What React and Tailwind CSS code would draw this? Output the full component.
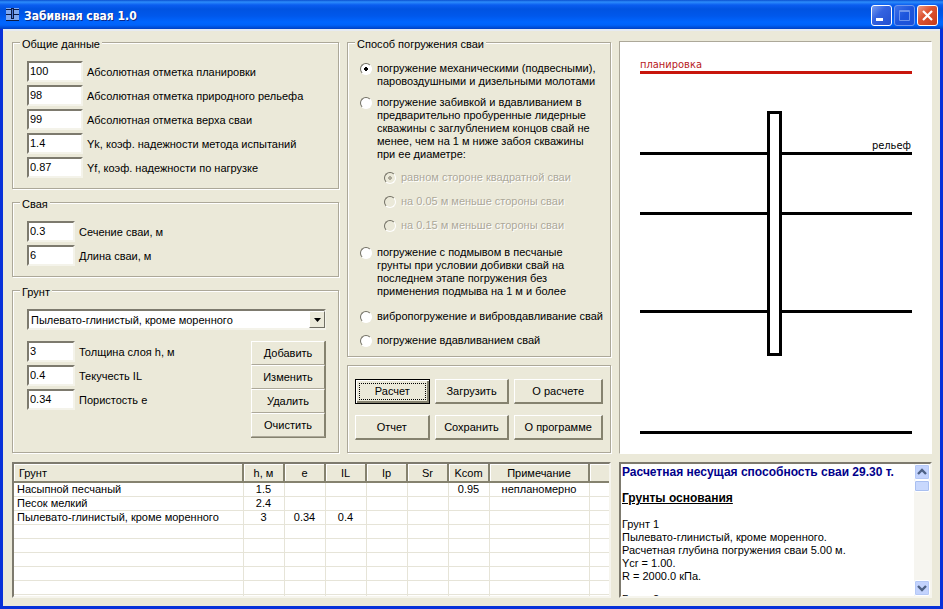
import React, { useState } from "react";

const generalFields = [
  { id: "plan", value: "100", label: "Абсолютная отметка планировки" },
  { id: "relief", value: "98", label: "Абсолютная отметка природного рельефа" },
  { id: "top", value: "99", label: "Абсолютная отметка верха сваи" },
  { id: "yk", value: "1.4", label: "Yk, коэф. надежности метода испытаний" },
  { id: "yf", value: "0.87", label: "Yf, коэф. надежности по нагрузке" },
];

const pileFields = [
  { id: "section", value: "0.3", label: "Сечение сваи, м" },
  { id: "length", value: "6", label: "Длина сваи, м" },
];

const soilFields = [
  { id: "thickness", value: "3", label: "Толщина слоя h, м" },
  { id: "fluidity", value: "0.4", label: "Текучесть IL" },
  { id: "porosity", value: "0.34", label: "Пористость e" },
];

const columns = ["Грунт", "h, м", "e", "IL", "Ip", "Sr", "Kcom", "Примечание", ""];

const soils = [
  ["Насыпной песчаный", "1.5", "", "", "", "", "0.95", "непланомерно", ""],
  ["Песок мелкий", "2.4", "", "", "", "", "", "", ""],
  ["Пылевато-глинистый, кроме моренного", "3", "0.34", "0.4", "", "", "", "", ""],
];

const emptyRows = [0, 1, 2, 3, 4, 5];

const Group = ({ title, className, children }) => (
  <fieldset className="min-w-0 border border-[#aca899] shadow-[1px_1px_0_#fff,inset_1px_1px_0_#fff]">
    <legend className="ml-[7px] bg-[#ebe9d9] px-[2px] pt-1">{title}</legend>
    <div className={className}>{children}</div>
  </fieldset>
);

const Field = ({ id, value, label, width }) => (
  <div className="flex items-center gap-1">
    <input
      id={id}
      type="text"
      defaultValue={value}
      className={`h-[21px] border-2 border-t-[#7d7a6e] border-l-[#7d7a6e] border-r-[#f4f3ea] border-b-[#f4f3ea] bg-white px-[1px] pb-[2px] outline-none ${width}`}
    />
    <label htmlFor={id} className="pt-[2px] whitespace-nowrap">
      {label}
    </label>
  </div>
);

const Button = ({ children }) => (
  <button
    type="button"
    className="h-[25px] border-t border-l border-r-2 border-b-2 border-t-white border-l-white border-r-[#85826f] border-b-[#85826f] bg-[#ebe9d9] text-center whitespace-nowrap active:border-t-[#85826f] active:border-l-[#85826f]">
    {children}
  </button>
);

const Radio = ({ name, value, current, onChange, lines, disabled, className = "" }) => (
  <label
    className={`flex items-start gap-[5px] ${disabled ? "text-[#aca899] [text-shadow:1px_1px_0_#fff]" : ""} ${className}`}>
    <input
      type="radio"
      name={name}
      value={value}
      checked={current === value}
      disabled={disabled}
      onChange={() => onChange(value)}
      className="mt-[1px] size-3 shrink-0 appearance-none rounded-full border border-t-[#716f64] border-l-[#716f64] border-r-white border-b-white bg-white checked:bg-[radial-gradient(circle,#000_2px,#fff_2px)] disabled:bg-[#ebe9d9] disabled:checked:bg-[radial-gradient(circle,#aca899_2px,#ebe9d9_2px)]"
    />
    <span className="whitespace-pre">{lines.join("\n")}</span>
  </label>
);

const TitleBar = () => (
  <header className="flex h-[29px] items-center bg-[linear-gradient(#0a4fd0_0,#2c8cfb_2px,#0a5df0_5px,#0053e1_9px,#0058ec_16px,#0066ff_22px,#0063fa_25px,#0041c4_29px)] pr-[5px] pl-[6px]">
    <svg viewBox="0 0 13 13" className="size-[13px]" shapeRendering="crispEdges">
      <rect width="13" height="13" fill="#7fa8f0" />
      <path d="M0 1.500h13M0 6.500h13M0 12.500h13" stroke="#0b1a44" />
      <path d="M5.500 0.500h2v10h-2z" fill="#4d7bd8" stroke="#0b1a44" />
    </svg>
    <h1 className="ml-[5px] flex-1 pt-[3px] font-['DejaVu_Sans_Condensed','DejaVu_Sans',sans-serif] text-[12px] leading-4 font-bold text-white [text-shadow:1px_1px_0_#0a2a8a]">
      Забивная свая 1.0
    </h1>
    <div className="flex gap-[2px] pt-[2px]">
      <button
        type="button"
        aria-label="Свернуть"
        className="size-[21px] rounded-[3px] border border-white bg-[linear-gradient(135deg,#7a9df0,#3463e0_40%,#2350d0)]">
        <svg viewBox="0 0 19 19">
          <path d="M4 12h7v3H4z" fill="#fff" />
        </svg>
      </button>
      <button
        type="button"
        aria-label="Развернуть"
        className="size-[21px] rounded-[3px] border border-[#6f97ee] bg-[linear-gradient(135deg,#3f72ea,#1d55dc_50%,#1a50d8)]">
        <svg viewBox="0 0 19 19">
          <path d="M4.500 4.500h10v10h-10zM4 5.500h11" fill="none" stroke="#6e95ec" />
        </svg>
      </button>
      <button
        type="button"
        aria-label="Закрыть"
        className="size-[21px] rounded-[3px] border border-white bg-[linear-gradient(135deg,#ee9b83,#dd5533_40%,#c63a18)]">
        <svg viewBox="0 0 19 19">
          <path d="M5 5l9 9M14 5l-9 9" stroke="#fff" strokeWidth="2.2" />
        </svg>
      </button>
    </div>
  </header>
);

const PileScheme = () => (
  <svg viewBox="0 0 311 411" className="block w-full">
    <g stroke="#000" strokeWidth="3">
      <path d="M20 30.500h272" stroke="#c8160c" />
      <path d="M20 111.500h272M20 171.500h272M20 269.500h272M20 390.500h272" />
      <rect x="148.500" y="70.500" width="12" height="242" fill="#fff" />
    </g>
    <text x="20" y="26" fill="#b8201c" className="font-['DejaVu_Sans_Condensed','DejaVu_Sans',sans-serif] text-[11px]">
      планировка
    </text>
    <text x="291" y="107" textAnchor="end" className="font-['DejaVu_Sans_Condensed','DejaVu_Sans',sans-serif] text-[11px]">
      рельеф
    </text>
  </svg>
);

const SoilTable = () => (
  <div className="h-[136px] overflow-hidden border-2 border-t-[#7d7a6e] border-l-[#7d7a6e] border-r-[#f6f5ee] border-b-[#f6f5ee] bg-white">
    <table className="w-full table-fixed border-collapse">
      <colgroup>
        <col className="w-[229px]" />
        <col className="w-[41px]" />
        <col className="w-[41px]" />
        <col className="w-[41px]" />
        <col className="w-[41px]" />
        <col className="w-[41px]" />
        <col className="w-[41px]" />
        <col className="w-[100px]" />
        <col />
      </colgroup>
      <thead>
        <tr className="h-[18px] bg-[#ebe9d9]">
          {columns.map((name, i) => (
            <th
              key={i}
              className={`border-r-2 border-b-2 border-[#85826f] p-0 pt-[1px] font-normal shadow-[inset_1px_1px_0_#fff] last:border-r-0 ${i === 0 ? "pl-[5px] text-left" : "text-center"}`}>
              {name}
            </th>
          ))}
        </tr>
      </thead>
      <tbody>
        {soils.map((row) => (
          <tr key={row[0]} className="h-[14px]">
            {row.map((cell, i) => (
              <td
                key={i}
                className={`border-r border-b border-[#e6e4d8] p-0 whitespace-nowrap last:border-r-0 ${i === 0 ? "pl-[3px] text-left" : "text-center"}`}>
                {cell}
              </td>
            ))}
          </tr>
        ))}
        {emptyRows.map((row) => (
          <tr key={row} className="h-[14px]">
            {columns.map((_, i) => (
              <td key={i} className="border-r border-b border-[#e6e4d8] p-0 last:border-r-0" />
            ))}
          </tr>
        ))}
      </tbody>
    </table>
  </div>
);

const ScrollButton = ({ label, d }) => (
  <button
    type="button"
    aria-label={label}
    className="h-4 w-full rounded-[2px] border border-white bg-[#c3d3fd] shadow-[inset_0_0_0_1px_#b4c8f6]">
    <svg viewBox="0 0 14 14">
      <path d={d} fill="none" stroke="#4d6185" strokeWidth="2.4" />
    </svg>
  </button>
);

const Report = () => (
  <div className="flex h-[136px] overflow-hidden border-2 border-t-[#7d7a6e] border-l-[#7d7a6e] border-r-[#f6f5ee] border-b-[#f6f5ee] bg-white">
    <div className="min-w-0 flex-1 overflow-hidden pt-[2px] pl-[1px] whitespace-nowrap">
      <h2 className="text-[12px] font-bold text-[#00008b]">
        Расчетная несущая способность сваи 29.30 т.
      </h2>
      <h3 className="mt-[13px] text-[12px] font-bold underline">Грунты основания</h3>
      <p className="mt-[13px]">Грунт 1</p>
      <p>Пылевато-глинистый, кроме моренного.</p>
      <p>Расчетная глубина погружения сваи 5.00 м.</p>
      <p>Ycr = 1.00.</p>
      <p>R = 2000.0 кПа.</p>
      <p className="mt-[10px]">Грунт 2</p>
    </div>
    <div className="flex w-4 flex-col bg-[#f6f5f0]">
      <ScrollButton label="Вверх" d="M3 9l4-4 4 4" />
      <div className="h-3 rounded-[2px] border border-white bg-[#c8d8fd] shadow-[inset_0_0_0_1px_#a9bff0]" />
      <div className="flex-1" />
      <ScrollButton label="Вниз" d="M3 5l4 4 4-4" />
    </div>
  </div>
);

export default function App() {
  const [method, setMethod] = useState("hammer");
  const [diameter, setDiameter] = useState("equal");

  return (
    <div className="flex min-h-screen flex-col bg-[#0831d9] font-['Liberation_Sans',Arial,sans-serif] text-[11px] leading-[13px] text-black">
      <TitleBar />
      <main className="mx-[3px] mb-[3px] grid flex-1 grid-cols-[minmax(0,327fr)_minmax(0,264fr)_minmax(0,313fr)] content-start gap-2 border-t-2 border-[#e6ebf3] bg-[#ebe9d9] px-2 pt-[3px] pb-2 pl-[9px]">
        <div className="flex flex-col gap-[5px]">
          <Group title="Общие данные" className="px-[14px] pt-[10px] pb-[10px]">
            <div className="flex flex-col gap-[3px]">
              {generalFields.map((f) => (
                <Field key={f.id} {...f} width="w-14" />
              ))}
            </div>
          </Group>

          <Group title="Свая" className="px-[14px] pt-[10px] pb-[10px]">
            <div className="flex flex-col gap-[3px]">
              {pileFields.map((f) => (
                <Field key={f.id} {...f} width="w-12" />
              ))}
            </div>
          </Group>

          <Group title="Грунт" className="pt-[10px] pr-3 pb-[14px] pl-[14px]">
            <div className="relative">
              <select
                aria-label="Тип грунта"
                className="block h-[21px] w-full appearance-none border-2 border-t-[#7d7a6e] border-l-[#7d7a6e] border-r-[#f4f3ea] border-b-[#f4f3ea] bg-white pt-[1px] pl-[2px] outline-none">
                <option>Пылевато-глинистый, кроме моренного</option>
                <option>Насыпной песчаный</option>
                <option>Песок мелкий</option>
              </select>
              <span className="pointer-events-none absolute top-[2px] right-[1px] flex h-[17px] w-4 items-center justify-center border border-t-white border-l-white border-r-[#716f64] border-b-[#716f64] bg-[#ebe9d9]">
                <svg viewBox="0 0 7 4" className="w-[7px]">
                  <path d="M0 0h7L3.500 4z" />
                </svg>
              </span>
            </div>
            <div className="mt-[11px] flex items-start justify-between">
              <div className="flex flex-col gap-[3px]">
                {soilFields.map((f) => (
                  <Field key={f.id} {...f} width="w-12" />
                ))}
              </div>
              <div className="flex w-[75px] flex-col border-r border-b border-[#85826f]">
                {["Добавить", "Изменить", "Удалить", "Очистить"].map((name) => (
                  <button
                    key={name}
                    type="button"
                    className="h-6 border border-t-white border-l-white border-r-[#85826f] border-b-[#aca899] bg-[#ebe9d9]">
                    {name}
                  </button>
                ))}
              </div>
            </div>
          </Group>
        </div>

        <div className="flex flex-col gap-2">
          <Group title="Способ погружения сваи" className="px-3 pt-[11px] pb-[9px]">
            <Radio
              name="method"
              value="hammer"
              current={method}
              onChange={setMethod}
              lines={["погружение механическими (подвесными),", "паровоздушными и дизельными молотами"]}
            />
            <Radio
              name="method"
              value="leader"
              current={method}
              onChange={setMethod}
              className="mt-2"
              lines={[
                "погружение забивкой и вдавливанием в",
                "предварительно пробуренные лидерные",
                "скважины с заглублением концов свай не",
                "менее, чем на 1 м ниже забоя скважины",
                "при ее диаметре:",
              ]}
            />
            <div className="mt-[10px] flex flex-col gap-[11px] pl-6">
              <Radio
                name="diameter"
                value="equal"
                current={diameter}
                onChange={setDiameter}
                disabled={method !== "leader"}
                lines={["равном стороне квадратной сваи"]}
              />
              <Radio
                name="diameter"
                value="minus5"
                current={diameter}
                onChange={setDiameter}
                disabled={method !== "leader"}
                lines={["на 0.05 м меньше стороны сваи"]}
              />
              <Radio
                name="diameter"
                value="minus15"
                current={diameter}
                onChange={setDiameter}
                disabled={method !== "leader"}
                lines={["на 0.15 м меньше стороны сваи"]}
              />
            </div>
            <Radio
              name="method"
              value="washing"
              current={method}
              onChange={setMethod}
              className="mt-[14px]"
              lines={[
                "погружение с подмывом в песчаные",
                "грунты при условии добивки свай на",
                "последнем этапе погружения без",
                "применения подмыва на 1 м и более",
              ]}
            />
            <Radio
              name="method"
              value="vibro"
              current={method}
              onChange={setMethod}
              className="mt-3"
              lines={["вибропогружение и вибровдавливание свай"]}
            />
            <Radio
              name="method"
              value="press"
              current={method}
              onChange={setMethod}
              className="mt-[11px]"
              lines={["погружение вдавливанием свай"]}
            />
          </Group>

          <div className="grid grid-cols-[75fr_75fr_89fr] gap-x-[5px] gap-y-[11px] border border-[#aca899] px-[7px] pt-[13px] pb-3 shadow-[1px_1px_0_#fff,inset_1px_1px_0_#fff]">
            {/* Default button has the black frame and focus dots */}
            <button
              type="button"
              className="h-[25px] border border-black bg-[#ebe9d9] p-[3px] shadow-[inset_1px_1px_0_#fff,inset_-2px_-2px_0_#85826f]">
              <span className="flex h-full items-center justify-center border border-dotted border-black">
                Расчет
              </span>
            </button>
            <Button>Загрузить</Button>
            <Button>О расчете</Button>
            <Button>Отчет</Button>
            <Button>Сохранить</Button>
            <Button>О программе</Button>
          </div>
        </div>

        <div className="mt-[7px] self-start border border-t-[#aca899] border-l-[#aca899] border-r-white border-b-white bg-white">
          <PileScheme />
        </div>

        <div className="col-span-2">
          <SoilTable />
        </div>
        <Report />
      </main>
    </div>
  );
}
